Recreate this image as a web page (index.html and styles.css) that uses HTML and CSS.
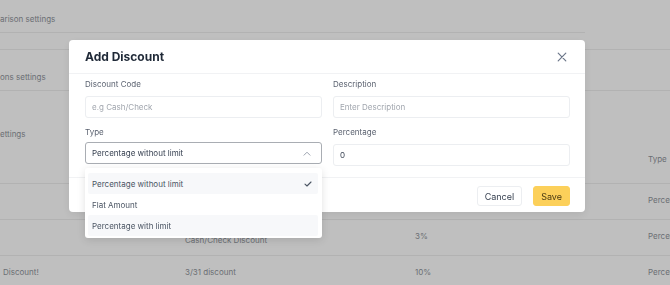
FILE: index.html
```html
<!DOCTYPE html>
<html lang="en">
<head>
  <meta charset="UTF-8" />
  <meta name="viewport" content="width=device-width, initial-scale=1.0"/>
  <title>Discounts - Add Discount</title>
  <link rel="stylesheet" href="styles.css">
</head>
<body>

<div class="page">
  <div class="settings-list">
    <div class="settings-row row-a">arison settings</div>
    <div class="settings-row row-b"></div>
    <div class="settings-row row-c">ons settings</div>
    <div class="settings-row row-d">ettings</div>
  </div>

  <div class="discount-table">
    <div class="table-row table-head">
      <div class="cell"></div>
      <div class="cell">Description</div>
      <div class="cell">Percentage</div>
      <div class="cell">Type</div>
    </div>
    <div class="table-row">
      <div class="cell"></div>
      <div class="cell">Welcome discount</div>
      <div class="cell">5%</div>
      <div class="cell">Percentage without limit</div>
    </div>
    <div class="table-row">
      <div class="cell"></div>
      <div class="cell cell-low">Cash/Check Discount</div>
      <div class="cell">3%</div>
      <div class="cell">Percentage without limit</div>
    </div>
    <div class="table-row">
      <div class="cell">Discount!</div>
      <div class="cell">3/31 discount</div>
      <div class="cell">10%</div>
      <div class="cell">Percentage without limit</div>
    </div>
  </div>
</div>

<div class="overlay">
  <div class="modal">
    <div class="modal-header">
      <h2>Add Discount</h2>
      <button class="close-btn" type="button" aria-label="Close">
        <svg width="10" height="10" viewBox="0 0 10 10">
          <path d="M1.2 1.2L8.8 8.8M8.8 1.2L1.2 8.8" stroke="#6b7689" stroke-width="1.2" stroke-linecap="round"/>
        </svg>
      </button>
    </div>

    <div class="modal-body">
      <div class="form-group">
        <label>Discount Code</label>
        <input type="text" placeholder="e.g Cash/Check">
      </div>
      <div class="form-group">
        <label>Description</label>
        <input type="text" placeholder="Enter Description">
      </div>
      <div class="form-group">
        <label>Type</label>
        <div class="select-wrap">
          <div class="select-box">
            <span>Percentage without limit</span>
            <svg width="8" height="5" viewBox="0 0 8 5">
              <path d="M1 4.2L4 1.2L7 4.2" fill="none" stroke="#9ca3af" stroke-width="1" stroke-linecap="round" stroke-linejoin="round"/>
            </svg>
          </div>
          <ul class="select-menu">
            <li class="option selected">
              <span>Percentage without limit</span>
              <svg width="8" height="6" viewBox="0 0 8 6">
                <path d="M1 3.2L3 5L7 1" fill="none" stroke="#4b5563" stroke-width="1.1" stroke-linecap="round" stroke-linejoin="round"/>
              </svg>
            </li>
            <li class="option">Flat Amount</li>
            <li class="option hover">Percentage with limit</li>
          </ul>
        </div>
      </div>
      <div class="form-group">
        <label>Percentage</label>
        <input type="text" value="0">
      </div>
    </div>

    <div class="modal-footer">
      <button class="btn btn-cancel" type="button">Cancel</button>
      <button class="btn btn-save" type="button">Save</button>
    </div>
  </div>
</div>

</body>
</html>
```

FILE: styles.css
```css
body {
  font-family: Inter, 'Noto Sans', sans-serif;
  margin: 0;
  background: #fff;
  overflow: hidden;
  white-space: nowrap;
}

/* page underneath the modal */
.page {
  color: #8f949b;
  font-size: 8px;
  line-height: 10px;
}

.settings-row {
  box-sizing: border-box;
  border-bottom: 1px solid #eeeeee;
}

.row-a {
  height: 33px;
  padding-top: 14px;
  width: 585px;
}

.row-b {
  height: 17px;
}

.row-c {
  height: 41px;
  padding-top: 22px;
}

.row-d {
  height: 49px;
  padding-top: 38px;
  border-bottom: none;
}

.table-row {
  display: grid;
  grid-template-columns: 185px 230px 233px 1fr;
  box-sizing: border-box;
  height: 36px;
  padding-top: 11px;
  border-bottom: 1px solid #eeeeee;
}

.table-head {
  height: 44px;
  padding-top: 14px;
}

.table-row .cell:first-child {
  padding-left: 3px;
}

.cell-low {
  padding-top: 4px;
}

/* modal */
.overlay {
  position: fixed;
  inset: 0;
  background: rgba(0, 0, 0, 0.25);
  padding: 40px 0 0 69px;
}

.modal {
  width: 516px;
  background: white;
  border-radius: 4px;
  box-shadow: 0 3px 10px rgba(0, 0, 0, 0.08);
}

.modal-header {
  box-sizing: border-box;
  height: 34px;
  display: flex;
  align-items: center;
  justify-content: space-between;
  padding: 0 18px 0 16px;
  border-bottom: 1px solid #f1f2f4;
}

.modal-header h2 {
  margin: 0;
  font-size: 12px;
  font-weight: 700;
  color: #1f2937;
}

.close-btn {
  background: none;
  border: none;
  padding: 0;
  display: flex;
  cursor: pointer;
}

.modal-body {
  display: grid;
  grid-template-columns: 237px 237px;
  column-gap: 11px;
  row-gap: 9px;
  padding: 5px 15px 11px 16px;
  border-bottom: 1px solid #f1f2f4;
}

.form-group label {
  display: block;
  font-size: 8px;
  line-height: 10px;
  color: #5b6270;
  margin-bottom: 5px;
}

.form-group input {
  box-sizing: border-box;
  width: 100%;
  height: 22px;
  padding: 0 6px;
  border: 1px solid #eceef1;
  border-radius: 3px;
  font-family: inherit;
  font-size: 8px;
  color: #374151;
  outline: none;
}

.form-group input::placeholder {
  color: #a1a6ae;
}

.select-wrap {
  position: relative;
}

.select-box {
  box-sizing: border-box;
  height: 22px;
  display: flex;
  align-items: center;
  justify-content: space-between;
  padding: 0 10px 0 6px;
  border: 1px solid #a9adb3;
  border-radius: 3px;
  font-size: 8px;
  color: #374151;
}

.select-menu {
  position: absolute;
  top: 26px;
  left: 0;
  right: 0;
  margin: 0;
  padding: 5px 4px 2px 3px;
  list-style: none;
  background: white;
  border-radius: 3px;
  box-shadow: 0 2px 8px rgba(0, 0, 0, 0.12);
  z-index: 2;
}

.option {
  height: 21px;
  display: flex;
  align-items: center;
  justify-content: space-between;
  padding: 0 6px 0 4px;
  font-size: 8px;
  color: #4b5563;
  border-radius: 2px;
}

.option.selected,
.option.hover {
  background: #f7f8fa;
}

.modal-footer {
  display: flex;
  justify-content: flex-end;
  gap: 11px;
  padding: 8px 15px 6px;
}

.btn {
  height: 20px;
  padding: 0 7px;
  border-radius: 3px;
  font-family: inherit;
  font-size: 9px;
  cursor: pointer;
}

.btn-cancel {
  background: white;
  border: 1px solid #eceef1;
  color: #374151;
}

.btn-save {
  background: #fcd05a;
  border: 1px solid #fcd05a;
  color: #4a3a12;
}
```
